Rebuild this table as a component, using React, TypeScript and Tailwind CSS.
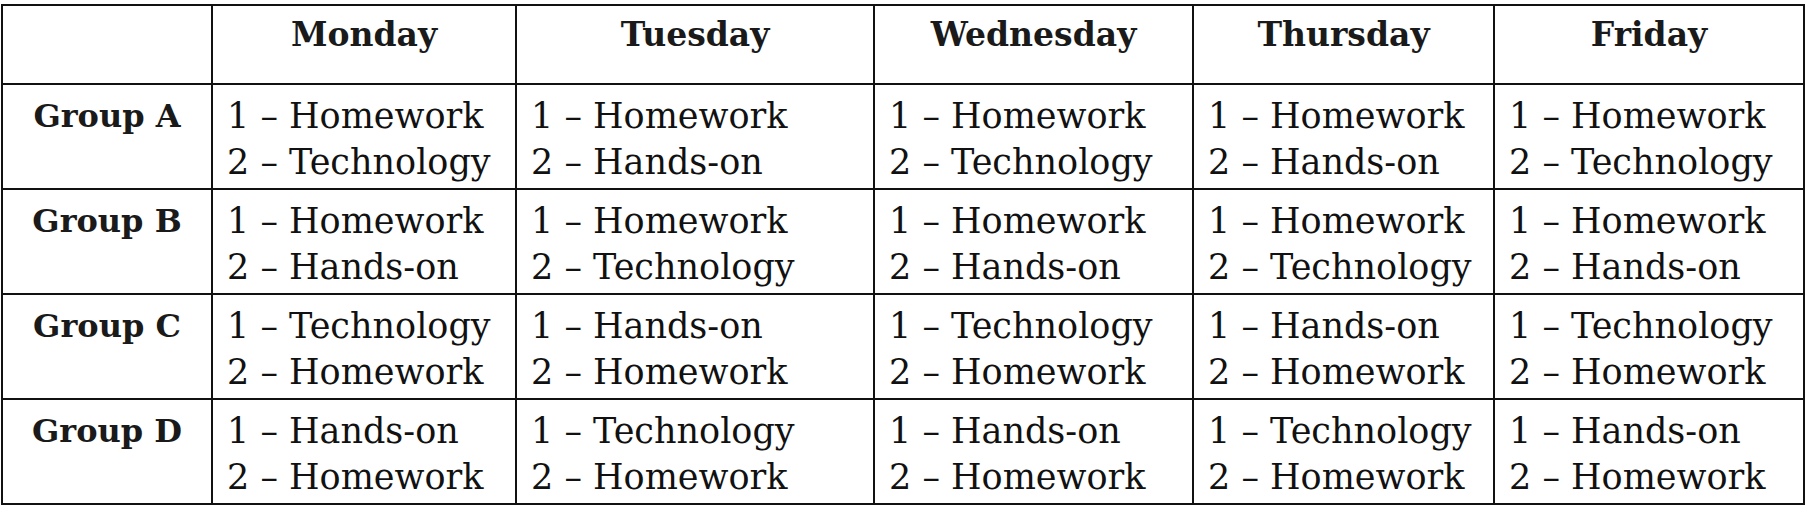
const DAYS = ["Monday", "Tuesday", "Wednesday", "Thursday", "Friday"];

const ROWS: { group: string; cells: [string, string][] }[] = [
  {
    group: "Group A",
    cells: [
      ["Homework", "Technology"],
      ["Homework", "Hands-on"],
      ["Homework", "Technology"],
      ["Homework", "Hands-on"],
      ["Homework", "Technology"],
    ],
  },
  {
    group: "Group B",
    cells: [
      ["Homework", "Hands-on"],
      ["Homework", "Technology"],
      ["Homework", "Hands-on"],
      ["Homework", "Technology"],
      ["Homework", "Hands-on"],
    ],
  },
  {
    group: "Group C",
    cells: [
      ["Technology", "Homework"],
      ["Hands-on", "Homework"],
      ["Technology", "Homework"],
      ["Hands-on", "Homework"],
      ["Technology", "Homework"],
    ],
  },
  {
    group: "Group D",
    cells: [
      ["Hands-on", "Homework"],
      ["Technology", "Homework"],
      ["Hands-on", "Homework"],
      ["Technology", "Homework"],
      ["Hands-on", "Homework"],
    ],
  },
];

export default function App() {
  return (
    <div className="h-[521px] w-[1807px] bg-white pl-[1px] pt-[4px] font-['DejaVu_Serif',serif] text-[#111]">
      <table className="w-[1804px] table-fixed border-collapse">
        <colgroup>
          <col className="w-[210px]" />
          <col className="w-[304px]" />
          <col className="w-[358px]" />
          <col className="w-[319px]" />
          <col className="w-[301px]" />
          <col className="w-[310px]" />
        </colgroup>
        <thead>
          <tr className="h-[79px]">
            <th className="border-2 border-[#111]" />
            {DAYS.map((d) => (
              <th
                key={d}
                className="border-2 border-[#111] pt-[6px] align-top text-[33px] font-semibold leading-[46px] text-[#1a1a1a]"
              >
                {d}
              </th>
            ))}
          </tr>
        </thead>
        <tbody>
          {ROWS.map((r) => (
            <tr key={r.group} className="h-[105px]">
              <td className="border-2 border-[#111] pt-[8px] text-center align-top text-[32px] font-semibold leading-[46px] text-[#1a1a1a]">
                {r.group}
              </td>
              {r.cells.map(([a, b], i) => (
                <td
                  key={i}
                  className="border-2 border-[#111] pl-[14px] pt-[8px] align-top text-[35px] leading-[46px] whitespace-nowrap"
                >
                  <div>1 – {a}</div>
                  <div>2 – {b}</div>
                </td>
              ))}
            </tr>
          ))}
        </tbody>
      </table>
    </div>
  );
}
